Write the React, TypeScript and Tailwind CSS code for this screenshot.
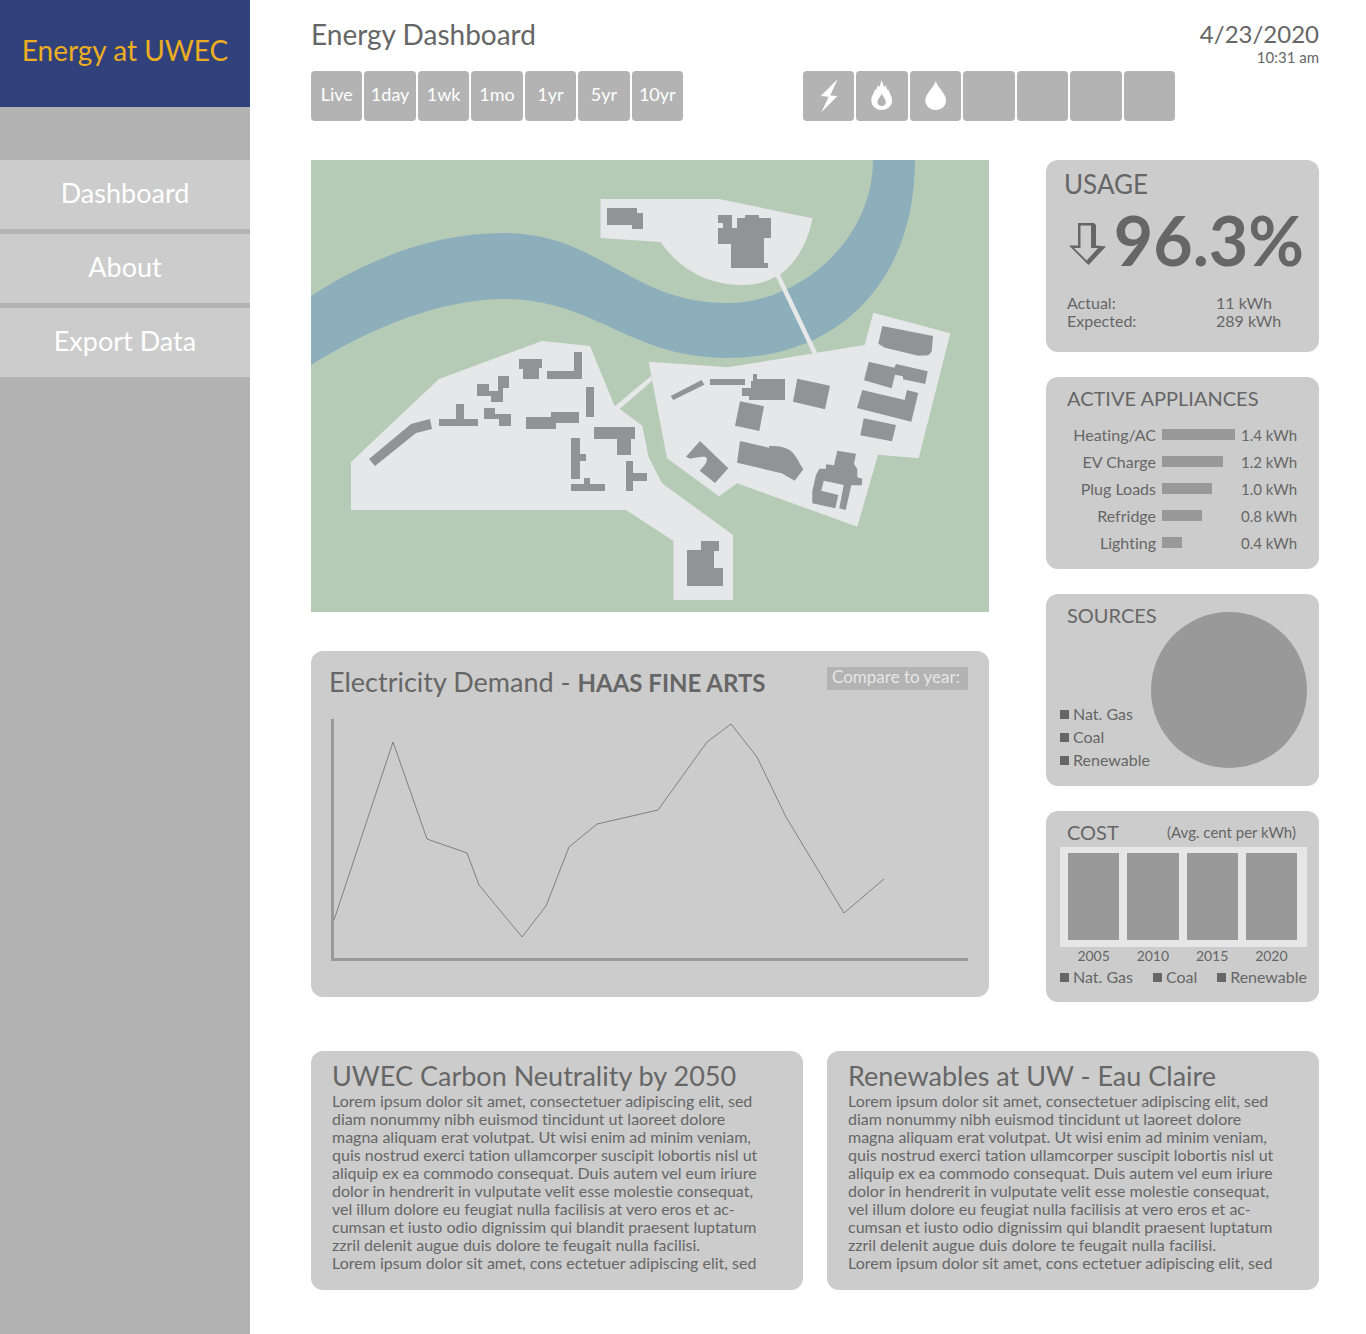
import type { ReactNode } from "react";

const ranges = ["Live", "1day", "1wk", "1mo", "1yr", "5yr", "10yr"];

const appliances = [
  { name: "Heating/AC", value: "1.4 kWh", width: 73 },
  { name: "EV Charge", value: "1.2 kWh", width: 61 },
  { name: "Plug Loads", value: "1.0 kWh", width: 50 },
  { name: "Refridge", value: "0.8 kWh", width: 40 },
  { name: "Lighting", value: "0.4 kWh", width: 20 },
];

const years = ["2005", "2010", "2015", "2020"];

const fuels = ["Nat. Gas", "Coal", "Renewable"];

const lorem = [
  "Lorem ipsum dolor sit amet, consectetuer adipiscing elit, sed",
  "diam nonummy nibh euismod tincidunt ut laoreet dolore",
  "magna aliquam erat volutpat. Ut wisi enim ad minim veniam,",
  "quis nostrud exerci tation ullamcorper suscipit lobortis nisl ut",
  "aliquip ex ea commodo consequat. Duis autem vel eum iriure",
  "dolor in hendrerit in vulputate velit esse molestie consequat,",
  "vel illum dolore eu feugiat nulla facilisis at vero eros et ac-",
  "cumsan et iusto odio dignissim qui blandit praesent luptatum",
  "zzril delenit augue duis dolore te feugait nulla facilisi.",
  "Lorem ipsum dolor sit amet, cons ectetuer adipiscing elit, sed",
];

const buildings = [
  "369,459 411,424 430,419 432,429 416,433 375,466",
  "439,419 456,419 456,404 464,404 464,419 478,419 478,426 439,426",
  "477,384 489,384 489,391 498,391 498,376 509,376 509,388 503,388 503,402 491,402 491,396 477,396",
  "484,408 495,408 495,414 511,414 511,426 499,426 499,419 484,419",
  "519,359 542,359 542,368 539,368 539,379 523,379 523,369 519,369",
  "547,371 574,371 574,352 582,352 582,379 547,379",
  "586,387 594,387 594,417 586,417",
  "526,417 551,417 551,412 579,412 579,423 556,423 556,429 526,429",
  "594,427 635,427 635,439 631,439 631,455 617,455 617,439 594,439",
  "571,438 580,438 580,454 586,454 586,461 580,461 580,479 571,479",
  "571,484 584,484 584,478 590,478 590,484 605,484 605,491 571,491",
  "626,461 633,461 633,473 647,473 647,481 633,481 633,491 626,491",
  "687,550 701,550 701,541 719,541 719,551 714,551 714,568 723,568 723,586 687,586",
  "607,208 637,208 637,213 643,213 643,229 632,229 632,225 607,225",
  "718,215 732,215 732,228 737,228 737,218 745,218 745,215 759,215 759,218 771,218 771,238 764,238 764,263 768,263 768,268 731,268 731,244 718,244 718,228 723,228 723,223 718,223",
  "670.7,396 701.7,380 704.3,384.7 673.3,400",
  "710,379 745,379 745,385 710,385",
  "753,374 757,374 757,379 785,379 785,400 749,400 749,396 742,396 742,388 751,388 751,381 753,381",
  "797.3,378.7 830,385.7 825,409.3 793,401.7",
  "740,401.3 764,406.3 759.3,431 735,425.7",
  "882.3,326 933,336 931.7,351.7 928.3,355.3 918.3,355.7 885,347.7 878.3,343.7",
  "868.7,361.7 894.3,367.7 896,364 927.7,371.3 925.3,384 903,379.3 903,376.3 895,374.7 891.7,388.3 864,380.3",
  "862.3,390 904.7,400 907,390 918.3,393 911.3,421.7 857,408",
  "863.7,418.3 896,425 892,441.3 860.3,435.3",
  "837.3,450.7 856,453.7 854,464 857.3,469 857.3,477.3 862.3,478.7 861.7,485.3 851.3,485.3 845.7,510 839.3,508.3 843.7,485 823.7,480.7 821.3,490.7 838.3,495 835.3,508.3 812.3,503.3 812.3,491 816,475 819.3,468.7 826,468.7 826,464.3 834,465.3",
];

function CampusMap() {
  return (
    <svg viewBox="311 160 678 452" className="block w-full" role="img" aria-label="Campus map">
      <rect x="311" y="160" width="678" height="452" fill="#b5cbb6" />
      <path
        fill="#8dafbc"
        d="M311 296C370 258 435 233 503 233C600 233 630 303 727 303C800 303 873 240 873 160H915C915 280 840 358 727 358C630 358 595 299 503 299C445 299 375 325 311 365Z"
      />
      <g fill="#e6e7e9">
        <path d="M351 462L439 379L542 341L590 346L614.7 406.3L651 376L652.3 380.7L619.7 409L642.3 425.7L648.7 457.3L662 483.3L733 535V600H673.5V541L626 510H351Z" />
        <path d="M600.5 199H719L812.3 218.3C808 245 793 266 780 274.3C768 282 755 285 743 285C705 285 678 267 660.7 242L600.5 238Z" />
        <path d="M648.7 361.7L728 367.3L864.7 345L873.3 312.7L950.3 333.3L918.7 458.3L878 454.7L857.3 526.7L737 483.3L719 496.3L667 458.3Z" />
      </g>
      <path d="M777.7 275L815.7 355" stroke="#e6e7e9" strokeWidth="4.5" />
      <g fill="#929397">
        {buildings.map((points) => (
          <polygon key={points} points={points} />
        ))}
        <path d="M740 441L769 447.7L769.3 445.7C777 446 783 446.5 788.3 449.3C795 453 798 461 803.3 469.3L794.7 480.7L781.7 473.3L737 462.7Z" />
        <path d="M700 441L728.3 468.3L715 483L699.7 470.7C703 467 707 463 707 459C707 455 698 457 690 458.7L686 456.7Z" />
      </g>
    </svg>
  );
}

function BoltIcon() {
  return (
    <svg viewBox="0 0 52 50" className="h-[50px] w-[52px]" fill="#fff">
      <path d="M35 8L27.5 24.5L35 25L18.5 41.5L26 25.8L18 25Z" />
    </svg>
  );
}

function FlameIcon() {
  return (
    <svg viewBox="0 0 52 50" className="h-[50px] w-[52px]" fill="#fff">
      <path
        fillRule="evenodd"
        d="M26 9C27 12 28 14 28.7 16.5L30 14C30.5 16 31 17.5 31.7 19L32.6 18C33.5 22 36.5 25 36.5 29.5C36.5 35 32 39 26 39S15.5 35 15.5 29.5C15.5 25 18.5 22 19.4 18L20.3 19C21 17.5 21.5 16 22 14L23.3 16.5C24 14 25 12 26 9ZM26 22.5C25 25.5 21.8 28 21.8 31.3C21.8 33.6 23.6 35.2 26 35.2S30.2 33.6 30.2 31.3C30.2 28 27 25.5 26 22.5Z"
      />
    </svg>
  );
}

function DropIcon() {
  return (
    <svg viewBox="0 0 52 50" className="h-[50px] w-[52px]" fill="#fff">
      <path d="M26 10C28.5 17 36.5 22.5 36.5 29.5C36.5 35 32 39 26 39S15.5 35 15.5 29.5C15.5 22.5 23.5 17 26 10Z" />
    </svg>
  );
}

function DownArrow() {
  return (
    <svg viewBox="0 0 37 42" className="mt-2 h-[42px] w-[37px] shrink-0">
      <path
        fillRule="evenodd"
        fill="#666"
        d="M9 0H25L27 2V22.5L37 23.5L19.5 42L0 22.5H9ZM11.5 2.5V25H5L17.7 37.5L29 25H22V2.5Z"
      />
    </svg>
  );
}

function DemandChart() {
  return (
    <svg viewBox="331 719 637 242" className="block w-full" role="img" aria-label="Electricity demand">
      <polyline
        fill="none"
        stroke="#808080"
        strokeWidth="1"
        points="334,920 393,742 427,839 467,853 479,885 522,937 546,906 569,847 597,824 658,810 707,742 731,724 757,757 786,817 844,913 884,879"
      />
      <path fill="#999" d="M331 719H334V958H968V961H331Z" />
    </svg>
  );
}

function Legend({ className }: { className: string }) {
  return (
    <ul className={className}>
      {fuels.map((fuel) => (
        <li key={fuel} className="flex items-center gap-1 text-base leading-[18px]">
          <span className="h-[9px] w-[9px] bg-[#666]" />
          {fuel}
        </li>
      ))}
    </ul>
  );
}

function Card({ children, className }: { children: ReactNode; className: string }) {
  return <section className={`rounded-xl bg-[#ccc] ${className}`}>{children}</section>;
}

function Article({ title }: { title: string }) {
  return (
    <Card className="min-h-[239px] flex-1 overflow-hidden px-[21px] pt-2 pb-4">
      <h2 className="text-[27px] leading-[33px]">{title}</h2>
      <p className="text-base leading-[18px] whitespace-nowrap">
        {lorem.map((line) => (
          <span key={line} className="block">
            {line}
          </span>
        ))}
      </p>
    </Card>
  );
}

export default function App() {
  const tile = "flex h-[50px] items-center justify-center rounded-[4px] bg-[#b3b3b3] text-white";
  return (
    <div className="flex min-h-screen bg-white font-['Lato',sans-serif] text-[#666] [font-variant-ligatures:none]">
      <aside className="w-[250px] shrink-0 bg-[#b3b3b3]">
        <div className="flex h-[107px] items-center justify-center bg-[#30417b] pb-2 text-[28px] text-[#ecae20]">
          Energy at UWEC
        </div>
        <nav className="mt-[53px] flex flex-col gap-[5px]">
          {["Dashboard", "About", "Export Data"].map((item) => (
            <a
              key={item}
              href="#"
              className="flex h-[69px] items-center justify-center bg-[#ccc] pb-0.5 text-[27px] text-white"
            >
              {item}
            </a>
          ))}
        </nav>
      </aside>

      <main className="min-w-0 flex-1 pr-[47px] pb-11 pl-[61px]">
        <header className="flex h-[71px] items-start justify-between pt-5">
          <h1 className="text-[28px] leading-[28px]">Energy Dashboard</h1>
          <div className="text-right">
            <div className="text-[24px] leading-[28px]">4/23/2020</div>
            <div className="text-[15px] leading-[18px]">10:31 am</div>
          </div>
        </header>

        <div className="flex gap-[120px]">
          <div className="grid w-[372px] grid-cols-7 gap-[2px]">
            {ranges.map((range) => (
              <button key={range} type="button" className={`${tile} pb-1 text-[18px]`}>
                {range}
              </button>
            ))}
          </div>
          <div className="grid w-[372px] grid-cols-7 gap-[2px]">
            <button type="button" aria-label="Electricity" className={tile}>
              <BoltIcon />
            </button>
            <button type="button" aria-label="Gas" className={tile}>
              <FlameIcon />
            </button>
            <button type="button" aria-label="Water" className={tile}>
              <DropIcon />
            </button>
            {[4, 5, 6, 7].map((slot) => (
              <button key={slot} type="button" aria-label={`Slot ${slot}`} className={tile} />
            ))}
          </div>
        </div>

        <div className="mt-[39px] flex gap-[57px]">
          <div className="flex min-w-0 flex-1 flex-col items-stretch gap-[39px]">
            <CampusMap />
            <Card className="pt-4 pr-[21px] pb-9 pl-5">
              <div className="mb-[19px] flex h-[33px] items-start justify-between">
                <h2 className="-ml-0.5 text-[27px] leading-[30px]">
                  Electricity Demand - <b className="text-[24px] leading-none font-bold">HAAS FINE ARTS</b>
                </h2>
                <select
                  aria-label="Compare to year"
                  className="h-[23px] w-[141px] appearance-none bg-[#b3b3b3] px-[5px] pb-1 text-[17px] leading-[18px] text-[#e6e6e6]"
                >
                  <option>Compare to year:</option>
                </select>
              </div>
              <DemandChart />
            </Card>
          </div>

          <div className="flex w-[273px] shrink-0 flex-col gap-[25px]">
            <Card className="h-[192px] pt-2 pr-[15px] pl-[18px]">
              <h2 className="text-[26px] leading-[33px]">USAGE</h2>
              <div className="flex h-[78px] items-center justify-between pl-[5px]">
                <DownArrow />
                <span className="text-[68px] leading-[78px] font-bold">96.3%</span>
              </div>
              <dl className="mt-[15px] grid grid-cols-[149px_1fr] pl-[3px] text-base leading-[18px]">
                <dt>Actual:</dt>
                <dd>11 kWh</dd>
                <dt>Expected:</dt>
                <dd>289 kWh</dd>
              </dl>
            </Card>

            <Card className="h-[192px] px-[21px] pt-2">
              <h2 className="text-[20px] leading-[26px]">ACTIVE APPLIANCES</h2>
              <table className="mt-2.5 w-full text-[15px]">
                <tbody>
                  {appliances.map((item) => (
                    <tr key={item.name} className="h-[27px]">
                      <th scope="row" className="w-[89px] p-0 text-right text-base leading-[18px] font-normal">
                        {item.name}
                      </th>
                      <td className="p-0 pl-1.5">
                        <div className="h-[11px] bg-[#999]" style={{ width: item.width }} />
                      </td>
                      <td className="p-0 pr-px text-right leading-[18px]">{item.value}</td>
                    </tr>
                  ))}
                </tbody>
              </table>
            </Card>

            <Card className="flex h-[192px] pr-3 pl-[14px]">
              <div className="flex w-[91px] shrink-0 flex-col justify-between pt-2 pb-[17px]">
                <h2 className="pl-[7px] text-[20px] leading-[26px]">SOURCES</h2>
                <Legend className="flex flex-col gap-[5px]" />
              </div>
              <div className="mt-[18px] h-[156px] w-[156px] shrink-0 rounded-full bg-[#999]" />
            </Card>

            <Card className="h-[191px] pt-2 pr-3 pl-[14px]">
              <div className="flex items-center justify-between pr-[11px] pl-[7px]">
                <h2 className="text-[20px] leading-[26px]">COST</h2>
                <span className="text-[15px] leading-[26px]">(Avg. cent per kWh)</span>
              </div>
              <div className="mt-0.5 grid h-[100px] grid-cols-4 gap-2 bg-[#e6e6e6] pt-1.5 pr-[10px] pb-[7px] pl-2">
                {years.map((year) => (
                  <div key={year} className="bg-[#999]" />
                ))}
              </div>
              <div className="grid grid-cols-4 gap-2 pr-[10px] pl-2 text-center text-[14px] leading-[18px]">
                {years.map((year) => (
                  <span key={year}>{year}</span>
                ))}
              </div>
              <Legend className="mt-[3px] flex justify-between" />
            </Card>
          </div>
        </div>

        <div className="mt-[49px] flex gap-6">
          <Article title="UWEC Carbon Neutrality by 2050" />
          <Article title="Renewables at UW - Eau Claire" />
        </div>
      </main>
    </div>
  );
}
